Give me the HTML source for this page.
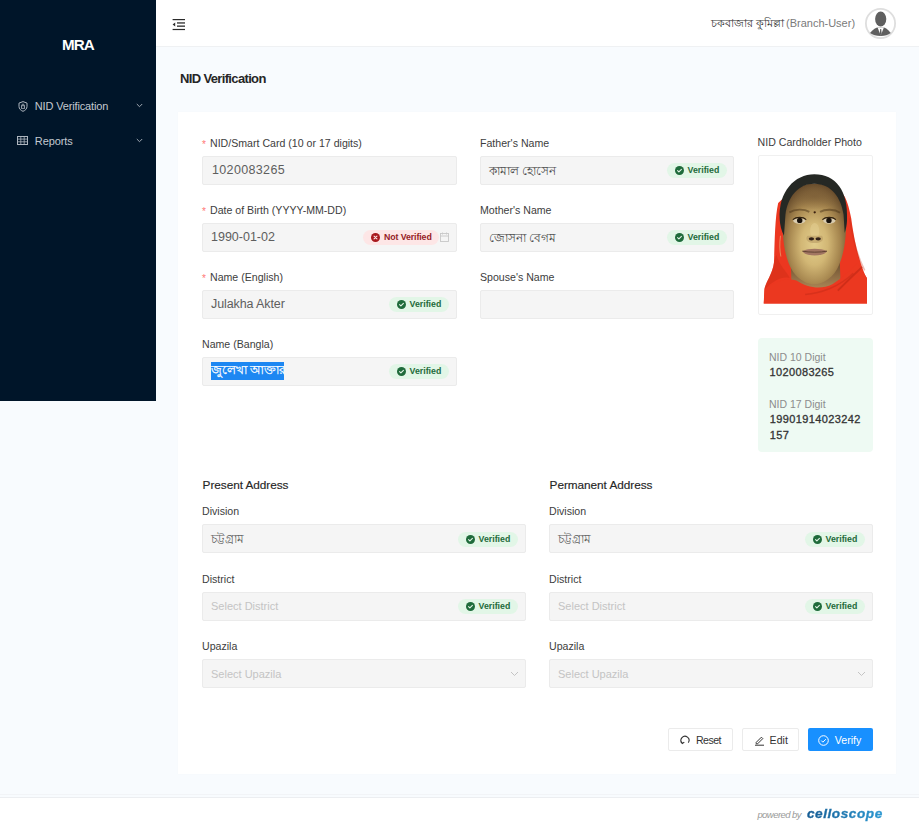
<!DOCTYPE html>
<html><head><meta charset="utf-8"><title>NID Verification</title><style>*{box-sizing:border-box;margin:0;padding:0}
html,body{width:919px;height:832px;overflow:hidden;background:#fff;font-family:"Liberation Sans",sans-serif}
.t,.b{position:absolute}
.t{white-space:nowrap}
.b svg{display:block}
.inp{background:#f5f5f5;border:1px solid #ebebeb;border-radius:2px}
.tag{border-radius:8px}
.tag.ok{background:#e2f6e7}
.tag.bad{background:#fde6e6}
.btn{border:1px solid #ebebeb;border-radius:2px;background:#fff}
</style></head><body>
<div class="b " style="left:0px;top:0px;width:919px;height:797px;background:#f8fbfe"></div>
<div class="b " style="left:0px;top:0px;width:156px;height:401px;background:#001529"></div>
<div class="t " style="left:62px;top:34.93px;font-size:15.2px;line-height:20px;font-weight:bold;color:#fff;letter-spacing:-0.9px">MRA</div>
<div class="b" style="left:17.5px;top:100.5px"><svg width="10" height="11" viewBox="0 0 10 11"><path d="M5 .6L1 2.1v3.3c0 2.4 1.7 4.1 4 4.9 2.3-.8 4-2.5 4-4.9V2.1z" fill="none" stroke="#aeb6bf" stroke-width="1"/><rect x="3.4" y="4.8" width="3.2" height="2.5" fill="none" stroke="#aeb6bf" stroke-width=".8"/><path d="M4 4.8V4a1 1 0 0 1 2 0v.8" fill="none" stroke="#aeb6bf" stroke-width=".8"/></svg></div><div class="t " style="left:34.8px;top:99.19px;font-size:11px;line-height:14px;color:#c4c9d0;letter-spacing:-0.15px">NID Verification</div>
<div class="b" style="left:136px;top:103px"><svg width="7" height="5" viewBox="0 0 7 5"><path d="M.8 1l2.7 2.7L6.2 1" fill="none" stroke="#a0a8b2" stroke-width="1"/></svg></div><div class="b" style="left:16.8px;top:136px"><svg width="11" height="9" viewBox="0 0 11 9"><rect x=".5" y=".5" width="10" height="8" fill="none" stroke="#aeb6bf" stroke-width="1"/><path d="M.5 3.1h10M.5 5.8h10M3.8 .5v8M7.2 .5v8" stroke="#aeb6bf" stroke-width=".8"/></svg></div><div class="t " style="left:34.8px;top:133.99px;font-size:11px;line-height:14px;color:#c4c9d0;letter-spacing:-0.1px">Reports</div>
<div class="b" style="left:136px;top:138px"><svg width="7" height="5" viewBox="0 0 7 5"><path d="M.8 1l2.7 2.7L6.2 1" fill="none" stroke="#a0a8b2" stroke-width="1"/></svg></div><div class="b " style="left:156px;top:0px;width:763px;height:47px;background:#fff;border-bottom:1px solid #eff1f3"></div>
<div class="b" style="left:172px;top:18px"><svg width="14" height="13" viewBox="0 0 14 13"><rect x=".6" y="1" width="12.4" height="1.2" fill="#2b2b2b"/><rect x="5" y="4.3" width="8" height="1.3" fill="#2b2b2b"/><rect x="5" y="7.5" width="8" height="1.3" fill="#2b2b2b"/><rect x=".6" y="10.9" width="12.4" height="1.2" fill="#2b2b2b"/><path d="M.6 6.5l2.6-2.1v4.2z" fill="#2b2b2b"/></svg></div><div class="t " style="left:711px;top:16.22px;font-size:10.9px;line-height:14px;color:#333">চকবাজার কুমিল্লা</div>
<div class="t " style="left:786px;top:16.19px;font-size:11px;line-height:14px;color:#7a7a7a">(Branch-User)</div>
<div class="b" style="left:864.5px;top:7.5px"><svg width="31" height="31" viewBox="0 0 31 31"><circle cx="15.5" cy="15.5" r="14.6" fill="#fff" stroke="#dedede" stroke-width="1.8"/><ellipse cx="15.7" cy="11" rx="5.6" ry="7.6" fill="#5f5f5f"/><path d="M5 25Q10 19.6 13 19.6L18.5 19.6Q21 19.6 25.8 25Q22 28 15.7 28Q9 28 5 25Z" fill="#5f5f5f"/><path d="M12.6 19.6L15.7 27.5L18.9 19.6Z" fill="#fff"/><path d="M15.2 21L16.2 21L16.7 26L15.7 27.3L14.7 26Z" fill="#5f5f5f"/></svg></div><div class="t " style="left:180px;top:70.00px;font-size:13px;line-height:17px;font-weight:bold;color:#262626;letter-spacing:-0.65px">NID Verification</div>
<div class="b " style="left:178px;top:112px;width:718px;height:662px;background:#fff;box-shadow:0 0 1px rgba(0,0,0,.04)"></div>
<div class="t " style="left:202px;top:137.73px;font-size:10px;line-height:13px;color:#ff7875">*</div>
<div class="t " style="left:210px;top:135.53px;font-size:10.6px;line-height:14px;color:#3d3d3d">NID/Smart Card (10 or 17 digits)</div>
<div class="b inp" style="left:202px;top:156px;width:255px;height:29px;"></div>
<div class="t " style="left:212px;top:162.17px;font-size:12.5px;line-height:16px;color:#5e5e5e;letter-spacing:0.35px">1020083265</div>
<div class="t " style="left:202px;top:205.34px;font-size:10px;line-height:13px;color:#ff7875">*</div>
<div class="t " style="left:210px;top:203.13px;font-size:10.6px;line-height:14px;color:#3d3d3d">Date of Birth (YYYY-MM-DD)</div>
<div class="b inp" style="left:202px;top:223px;width:255px;height:29px;"></div>
<div class="t " style="left:211px;top:229.17px;font-size:12.5px;line-height:16px;color:#5e5e5e">1990-01-02</div>
<div class="b tag bad" style="left:363px;top:230px;width:76px;height:15px;"></div>
<div class="b" style="left:370.5px;top:233px;width:9px;height:9px"><svg width="9" height="9" viewBox="0 0 16 16"><circle cx="8" cy="8" r="8" fill="#a8181d"/><path d="M5.4 5.4l5.2 5.2M10.6 5.4l-5.2 5.2" fill="none" stroke="#fde6e6" stroke-width="1.9" stroke-linecap="round"/></svg></div><div class="t " style="left:384px;top:232.15px;font-size:8.8px;line-height:11px;font-weight:bold;color:#962127;letter-spacing:-0.1px">Not Verified</div>
<div class="b" style="left:440px;top:232px"><svg width="9" height="10" viewBox="0 0 9 10"><rect x=".5" y="1.5" width="8" height="8" fill="none" stroke="#c8c8c8" stroke-width=".9"/><path d="M.5 4h8M2.5 .5v2M6.5 .5v2" stroke="#c8c8c8" stroke-width=".9"/></svg></div><div class="t " style="left:202px;top:272.04px;font-size:10px;line-height:13px;color:#ff7875">*</div>
<div class="t " style="left:210px;top:269.83px;font-size:10.6px;line-height:14px;color:#3d3d3d">Name (English)</div>
<div class="b inp" style="left:202px;top:290px;width:255px;height:29px;"></div>
<div class="t " style="left:211px;top:296.17px;font-size:12.5px;line-height:16px;color:#5e5e5e;letter-spacing:-0.1px">Julakha Akter</div>
<div class="b tag ok" style="left:389px;top:297px;width:60px;height:15px;"></div>
<div class="b" style="left:396.5px;top:300px;width:9px;height:9px"><svg width="9" height="9" viewBox="0 0 16 16"><circle cx="8" cy="8" r="8" fill="#1f6b3b"/><path d="M4.6 8.2l2.3 2.3 4.5-4.7" fill="none" stroke="#e6f7ea" stroke-width="1.9" stroke-linecap="round" stroke-linejoin="round"/></svg></div><div class="t " style="left:409.5px;top:299.15px;font-size:8.8px;line-height:11px;font-weight:bold;color:#1f6b3b">Verified</div>
<div class="t " style="left:202px;top:336.83px;font-size:10.6px;line-height:14px;color:#3d3d3d">Name (Bangla)</div>
<div class="b inp" style="left:202px;top:357px;width:255px;height:29px;"></div>
<div class="b " style="left:211px;top:362.2px;width:73px;height:17.8px;background:#1d87f2"></div>
<div class="t " style="left:211px;top:362.07px;font-size:12.2px;line-height:16px;color:#fff;width:73px;overflow:hidden;white-space:nowrap;letter-spacing:-0.1px;-webkit-text-stroke:.25px #fff">জুলেখা আক্তার</div>
<div class="b tag ok" style="left:389px;top:364px;width:60px;height:15px;"></div>
<div class="b" style="left:396.5px;top:367px;width:9px;height:9px"><svg width="9" height="9" viewBox="0 0 16 16"><circle cx="8" cy="8" r="8" fill="#1f6b3b"/><path d="M4.6 8.2l2.3 2.3 4.5-4.7" fill="none" stroke="#e6f7ea" stroke-width="1.9" stroke-linecap="round" stroke-linejoin="round"/></svg></div><div class="t " style="left:409.5px;top:366.15px;font-size:8.8px;line-height:11px;font-weight:bold;color:#1f6b3b">Verified</div>
<div class="t " style="left:480px;top:135.53px;font-size:10.6px;line-height:14px;color:#3d3d3d">Father's Name</div>
<div class="b inp" style="left:480px;top:156px;width:254px;height:29px;"></div>
<div class="t " style="left:489px;top:162.84px;font-size:12px;line-height:16px;color:#4a4a4a">কামাল হোসেন</div>
<div class="b tag ok" style="left:667px;top:163px;width:60px;height:15px;"></div>
<div class="b" style="left:674.5px;top:166px;width:9px;height:9px"><svg width="9" height="9" viewBox="0 0 16 16"><circle cx="8" cy="8" r="8" fill="#1f6b3b"/><path d="M4.6 8.2l2.3 2.3 4.5-4.7" fill="none" stroke="#e6f7ea" stroke-width="1.9" stroke-linecap="round" stroke-linejoin="round"/></svg></div><div class="t " style="left:687.5px;top:165.15px;font-size:8.8px;line-height:11px;font-weight:bold;color:#1f6b3b">Verified</div>
<div class="t " style="left:480px;top:203.13px;font-size:10.6px;line-height:14px;color:#3d3d3d">Mother's Name</div>
<div class="b inp" style="left:480px;top:223px;width:254px;height:29px;"></div>
<div class="t " style="left:489px;top:229.84px;font-size:12px;line-height:16px;color:#4a4a4a">জোসনা বেগম</div>
<div class="b tag ok" style="left:667px;top:230px;width:60px;height:15px;"></div>
<div class="b" style="left:674.5px;top:233px;width:9px;height:9px"><svg width="9" height="9" viewBox="0 0 16 16"><circle cx="8" cy="8" r="8" fill="#1f6b3b"/><path d="M4.6 8.2l2.3 2.3 4.5-4.7" fill="none" stroke="#e6f7ea" stroke-width="1.9" stroke-linecap="round" stroke-linejoin="round"/></svg></div><div class="t " style="left:687.5px;top:232.15px;font-size:8.8px;line-height:11px;font-weight:bold;color:#1f6b3b">Verified</div>
<div class="t " style="left:480px;top:269.83px;font-size:10.6px;line-height:14px;color:#3d3d3d">Spouse's Name</div>
<div class="b inp" style="left:480px;top:290px;width:254px;height:29px;"></div>
<div class="t " style="left:757.6px;top:135.33px;font-size:10.6px;line-height:14px;color:#3d3d3d">NID Cardholder Photo</div>
<div class="b " style="left:757.5px;top:155px;width:115px;height:160px;background:#fff;border:1px solid #f0f0f0;border-radius:2px"></div>
<div class="b" style="left:763px;top:160px;width:104px;height:144px;overflow:hidden;filter:blur(.45px)"><svg width="116" height="160" viewBox="0 0 603 832" style="position:absolute;left:-6px;top:-5px"><defs><radialGradient id="sk" cx="0.5" cy="0.6" r="0.6"><stop offset="0" stop-color="#e2cd8c"/><stop offset="0.35" stop-color="#d2b775"/><stop offset="0.68" stop-color="#a5854e"/><stop offset="1" stop-color="#64492a"/></radialGradient><radialGradient id="fh" cx="0.5" cy="0.5" r="0.5"><stop offset="0" stop-color="#7a5c36" stop-opacity=".7"/><stop offset="1" stop-color="#7a5c36" stop-opacity="0"/></radialGradient><linearGradient id="nk" x1="0" y1="0" x2="0" y2="1"><stop offset="0" stop-color="#5e4428"/><stop offset="1" stop-color="#b08a58"/></linearGradient></defs>
<path d="M110 250C92 330 92 470 88 560C80 620 45 660 38 700L35 772L572 772L570 640C540 580 508 470 490 330C478 270 466 225 444 200C380 150 200 150 110 250Z" fill="#ec3720"/>
<path d="M175 530L430 530L435 705L180 705Z" fill="url(#nk)"/>
<path d="M132 340C130 210 205 148 298 148C395 148 466 212 464 345C464 470 440 565 402 615C365 660 325 672 298 672C262 672 220 652 188 608C148 550 132 450 132 340Z" fill="url(#sk)"/>
<ellipse cx="298" cy="215" rx="135" ry="70" fill="url(#fh)"/>
<path d="M118 335C110 190 196 100 298 100C410 100 476 185 468 340C467 362 462 385 456 405L450 310C438 225 388 150 298 150C212 150 160 220 148 310L140 420C126 390 120 365 118 335Z" fill="#252824"/>
<path d="M40 700C100 652 160 640 205 652C262 690 332 702 392 672C442 642 482 602 522 562L572 640L572 772L35 772Z" fill="#eb3820"/>
<path d="M88 560C80 620 45 660 38 700C90 650 130 630 170 640C150 600 120 580 100 520Z" fill="#cf2e16" opacity=".5"/>
<path d="M420 705C470 655 520 605 548 582" fill="none" stroke="#a82010" stroke-width="10" opacity=".4"/>
<path d="M250 725C330 720 430 685 500 615" fill="none" stroke="#b52414" stroke-width="8" opacity=".35"/>
<path d="M482 330C498 440 524 530 560 600" fill="none" stroke="#c22a14" stroke-width="8" opacity=".3"/>
<path d="M168 298C198 280 245 280 272 296M328 296C355 280 402 280 432 300" fill="none" stroke="#4a3418" stroke-width="10" opacity=".5"/>
<ellipse cx="220" cy="342" rx="32" ry="15" fill="#d9ccb0"/><ellipse cx="376" cy="342" rx="32" ry="15" fill="#d9ccb0"/>
<circle cx="222" cy="340" r="14" fill="#17100a"/><circle cx="374" cy="340" r="14" fill="#17100a"/>
<path d="M186 336C204 320 240 320 256 336M340 336C356 320 394 320 410 336" fill="none" stroke="#2e2010" stroke-width="6"/>
<ellipse cx="300" cy="395" rx="24" ry="42" fill="#e6d296" opacity=".45"/>
<path d="M262 420C248 440 262 458 300 458C338 458 352 440 338 420" fill="#b89a62" opacity=".6"/>
<ellipse cx="283" cy="436" rx="14" ry="8" fill="#33231a"/><ellipse cx="318" cy="436" rx="14" ry="8" fill="#33231a"/>
<path d="M236 500C270 484 330 484 364 500C344 530 256 530 236 500Z" fill="#a27662"/>
<path d="M236 500C270 507 330 507 364 500" fill="none" stroke="#5e4030" stroke-width="5"/>
<circle cx="300" cy="298" r="6" fill="#3a2010"/>
<path d="M122 420C116 460 118 500 124 528" fill="none" stroke="#e8d090" stroke-width="5" opacity=".55"/>
</svg>
</div><div class="b " style="left:757.5px;top:338px;width:115px;height:114px;background:#eefaf3;border-radius:4px"></div>
<div class="t " style="left:769px;top:349.76px;font-size:10.5px;line-height:14px;color:#8c8c8c">NID 10 Digit</div>
<div class="t " style="left:769.4px;top:364.79px;font-size:11px;line-height:14px;color:#333;letter-spacing:0.38px;-webkit-text-stroke:.3px #333">1020083265</div>
<div class="t " style="left:769px;top:396.86px;font-size:10.5px;line-height:14px;color:#8c8c8c">NID 17 Digit</div>
<div class="t " style="left:769.8px;top:411.94px;font-size:11px;line-height:14px;color:#333;letter-spacing:0.38px;-webkit-text-stroke:.3px #333">19901914023242</div>
<div class="t " style="left:769.8px;top:427.59px;font-size:11px;line-height:14px;color:#333;letter-spacing:0.38px;-webkit-text-stroke:.3px #333">157</div>
<div class="t " style="left:202.6px;top:478.31px;font-size:11.8px;line-height:15px;color:#262626;letter-spacing:-0.05px;-webkit-text-stroke:.15px #262626">Present Address</div>
<div class="t " style="left:202px;top:504.43px;font-size:10.6px;line-height:14px;color:#3d3d3d">Division</div>
<div class="b inp" style="left:202px;top:524px;width:324px;height:29px;"></div>
<div class="t " style="left:211px;top:531.52px;font-size:11.5px;line-height:15px;color:#5e5e5e">চট্টগ্রাম</div>
<div class="b tag ok" style="left:458px;top:531.5px;width:60px;height:15px;"></div>
<div class="b" style="left:465.5px;top:534.5px;width:9px;height:9px"><svg width="9" height="9" viewBox="0 0 16 16"><circle cx="8" cy="8" r="8" fill="#1f6b3b"/><path d="M4.6 8.2l2.3 2.3 4.5-4.7" fill="none" stroke="#e6f7ea" stroke-width="1.9" stroke-linecap="round" stroke-linejoin="round"/></svg></div><div class="t " style="left:478.5px;top:533.65px;font-size:8.8px;line-height:11px;font-weight:bold;color:#1f6b3b">Verified</div>
<div class="t " style="left:202px;top:571.73px;font-size:10.6px;line-height:14px;color:#3d3d3d">District</div>
<div class="b inp" style="left:202px;top:592px;width:324px;height:29px;"></div>
<div class="t " style="left:211px;top:599.19px;font-size:11px;line-height:14px;color:#c4c4c4">Select District</div>
<div class="b tag ok" style="left:458px;top:599px;width:60px;height:15px;"></div>
<div class="b" style="left:465.5px;top:602px;width:9px;height:9px"><svg width="9" height="9" viewBox="0 0 16 16"><circle cx="8" cy="8" r="8" fill="#1f6b3b"/><path d="M4.6 8.2l2.3 2.3 4.5-4.7" fill="none" stroke="#e6f7ea" stroke-width="1.9" stroke-linecap="round" stroke-linejoin="round"/></svg></div><div class="t " style="left:478.5px;top:601.15px;font-size:8.8px;line-height:11px;font-weight:bold;color:#1f6b3b">Verified</div>
<div class="t " style="left:202px;top:638.93px;font-size:10.6px;line-height:14px;color:#3d3d3d">Upazila</div>
<div class="b inp" style="left:202px;top:659px;width:324px;height:29px;"></div>
<div class="t " style="left:211px;top:666.69px;font-size:11px;line-height:14px;color:#c4c4c4">Select Upazila</div>
<div class="b" style="left:510px;top:671px"><svg width="9" height="6" viewBox="0 0 9 6"><path d="M1 1l3.5 3.5L8 1" fill="none" stroke="#c4c4c4" stroke-width="1"/></svg></div><div class="t " style="left:549.6px;top:478.31px;font-size:11.8px;line-height:15px;color:#262626;letter-spacing:-0.05px;-webkit-text-stroke:.15px #262626">Permanent Address</div>
<div class="t " style="left:549px;top:504.43px;font-size:10.6px;line-height:14px;color:#3d3d3d">Division</div>
<div class="b inp" style="left:549px;top:524px;width:324px;height:29px;"></div>
<div class="t " style="left:558px;top:531.52px;font-size:11.5px;line-height:15px;color:#5e5e5e">চট্টগ্রাম</div>
<div class="b tag ok" style="left:805px;top:531.5px;width:60px;height:15px;"></div>
<div class="b" style="left:812.5px;top:534.5px;width:9px;height:9px"><svg width="9" height="9" viewBox="0 0 16 16"><circle cx="8" cy="8" r="8" fill="#1f6b3b"/><path d="M4.6 8.2l2.3 2.3 4.5-4.7" fill="none" stroke="#e6f7ea" stroke-width="1.9" stroke-linecap="round" stroke-linejoin="round"/></svg></div><div class="t " style="left:825.5px;top:533.65px;font-size:8.8px;line-height:11px;font-weight:bold;color:#1f6b3b">Verified</div>
<div class="t " style="left:549px;top:571.73px;font-size:10.6px;line-height:14px;color:#3d3d3d">District</div>
<div class="b inp" style="left:549px;top:592px;width:324px;height:29px;"></div>
<div class="t " style="left:558px;top:599.19px;font-size:11px;line-height:14px;color:#c4c4c4">Select District</div>
<div class="b tag ok" style="left:805px;top:599px;width:60px;height:15px;"></div>
<div class="b" style="left:812.5px;top:602px;width:9px;height:9px"><svg width="9" height="9" viewBox="0 0 16 16"><circle cx="8" cy="8" r="8" fill="#1f6b3b"/><path d="M4.6 8.2l2.3 2.3 4.5-4.7" fill="none" stroke="#e6f7ea" stroke-width="1.9" stroke-linecap="round" stroke-linejoin="round"/></svg></div><div class="t " style="left:825.5px;top:601.15px;font-size:8.8px;line-height:11px;font-weight:bold;color:#1f6b3b">Verified</div>
<div class="t " style="left:549px;top:638.93px;font-size:10.6px;line-height:14px;color:#3d3d3d">Upazila</div>
<div class="b inp" style="left:549px;top:659px;width:324px;height:29px;"></div>
<div class="t " style="left:558px;top:666.69px;font-size:11px;line-height:14px;color:#c4c4c4">Select Upazila</div>
<div class="b" style="left:857px;top:671px"><svg width="9" height="6" viewBox="0 0 9 6"><path d="M1 1l3.5 3.5L8 1" fill="none" stroke="#c4c4c4" stroke-width="1"/></svg></div><div class="b btn" style="left:668px;top:728px;width:65px;height:23px;"></div>
<div class="b" style="left:680px;top:735px"><svg width="10" height="10" viewBox="0 0 10 10"><path d="M2.2 8.2A4 4 0 1 1 8.3 7.6" fill="none" stroke="#333" stroke-width="1.1"/><path d="M0.8 6.6l1.6 1.9 1.9-1.4" fill="none" stroke="#333" stroke-width="1.1"/></svg></div><div class="t " style="left:695.9px;top:733.03px;font-size:10.6px;line-height:14px;color:#333;letter-spacing:-0.5px">Reset</div>
<div class="b btn" style="left:742px;top:728px;width:57px;height:23px;"></div>
<div class="b" style="left:753.5px;top:734.5px"><svg width="11" height="11" viewBox="0 0 11 11"><path d="M2.2 7.4L7.4 2.2l1.4 1.4-5.2 5.2H2.2z" fill="none" stroke="#333" stroke-width="1"/><path d="M1 10.2h9" stroke="#333" stroke-width="1"/></svg></div><div class="t " style="left:769.6px;top:733.03px;font-size:10.6px;line-height:14px;color:#333">Edit</div>
<div class="b " style="left:807.5px;top:728px;width:65.5px;height:23px;background:#1890ff;border-radius:2px"></div>
<div class="b" style="left:818px;top:734.5px"><svg width="11" height="11" viewBox="0 0 11 11"><circle cx="5.5" cy="5.5" r="4.8" fill="none" stroke="#fff" stroke-width="1"/><path d="M3.3 5.6l1.6 1.6 2.9-3" fill="none" stroke="#fff" stroke-width="1"/></svg></div><div class="t " style="left:834.8px;top:733.03px;font-size:10.6px;line-height:14px;color:#fff">Verify</div>
<div class="b " style="left:0px;top:794px;width:919px;height:1px;background:#f2f4f7"></div>
<div class="b " style="left:0px;top:797px;width:919px;height:35px;background:#fff;border-top:1px solid #eceef1"></div>
<div class="t " style="left:757.4px;top:809.31px;font-size:9.5px;line-height:12px;font-style:italic;color:#9a9a9a;letter-spacing:-0.55px">powered by</div>
<div class="t " style="left:807px;top:804.89px;font-size:13.6px;line-height:18px;font-style:italic;font-weight:bold;color:transparent;background:linear-gradient(90deg,#155c94,#2b9ad4);-webkit-background-clip:text;background-clip:text;letter-spacing:0.55px;-webkit-text-stroke:.35px transparent;padding-right:3px">celloscope</div>
</body></html>
